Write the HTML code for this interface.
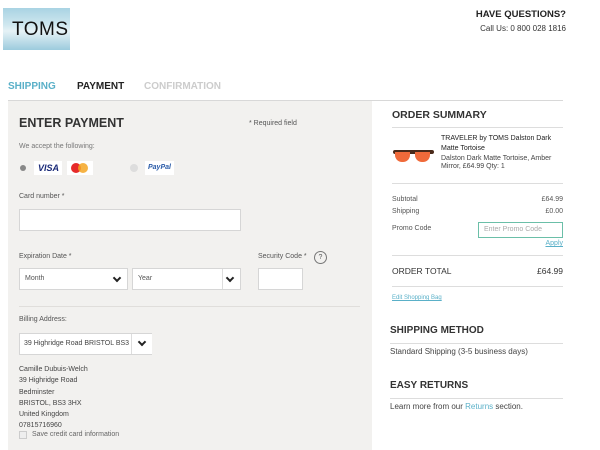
<!DOCTYPE html>
<html><head><meta charset="utf-8"><style>
*{margin:0;padding:0;box-sizing:border-box}
body{width:600px;height:450px;overflow:hidden;background:#fff;font-family:"Liberation Sans",sans-serif;color:#333;position:relative}
.a{position:absolute;white-space:nowrap}
.b{font-weight:bold}
.s{font-size:7px;color:#555}
.box{position:absolute;background:#fff;border:1px solid #d6d6d6}
.ln{position:absolute;height:1px;background:#ddd}
.chev{position:absolute;width:6px;height:6px;border-right:2px solid #222;border-bottom:2px solid #222;transform:rotate(45deg)}
</style></head><body>
<div class="a" style="left:3px;top:8px;width:67px;height:42px;background:linear-gradient(180deg,#a9d3e3,#cfe7ef 40%,#e6f2f6 55%,#9ccbdd)"></div>
<div class="a" style="left:12px;top:19px;font-size:19px;color:#111;letter-spacing:0.5px">TOMS</div>
<div class="a b" style="right:34px;top:9px;font-size:9.5px;color:#222">HAVE QUESTIONS?</div>
<div class="a" style="right:34px;top:24px;font-size:8px;color:#333">Call Us: 0 800 028 1816</div>
<div class="a b" style="left:8px;top:81px;font-size:10px;color:#5ab0c8">SHIPPING</div>
<div class="a b" style="left:77px;top:81px;font-size:10px;color:#222">PAYMENT</div>
<div class="a b" style="left:144px;top:81px;font-size:10px;color:#ccc">CONFIRMATION</div>
<div class="ln" style="left:8px;top:100px;width:555px;background:#d8d8d8"></div>
<div class="a" style="left:8px;top:101px;width:364px;height:349px;background:#f2f1ef"></div>
<div class="a b" style="left:19px;top:116px;font-size:12.5px;color:#333">ENTER PAYMENT</div>
<div class="a s" style="left:249px;top:120px">* Required field</div>
<div class="a s" style="left:19px;top:143px;color:#777">We accept the following:</div>
<div class="a" style="left:20px;top:165px;width:6px;height:6px;border-radius:50%;background:#888"></div>
<div class="a" style="left:34px;top:161px;width:28px;height:14px;background:#fff"></div>
<div class="a b" style="left:38px;top:163px;font-size:9px;color:#1a2a78;font-style:italic">VISA</div>
<div class="a" style="left:67px;top:161px;width:26px;height:14px;background:#fff"></div>
<div class="a" style="left:71px;top:163px;width:10px;height:10px;border-radius:50%;background:#e62a2a"></div>
<div class="a" style="left:78px;top:163px;width:10px;height:10px;border-radius:50%;background:#f5a623;opacity:.85"></div>
<div class="a" style="left:130px;top:164px;width:8px;height:8px;border-radius:50%;background:#ddd"></div>
<div class="a" style="left:145px;top:161px;width:29px;height:14px;background:#fff"></div>
<div class="a b" style="left:148px;top:164px;font-size:7px;color:#2a5ba8;font-style:italic">PayPal</div>
<div class="a s" style="left:19px;top:193px">Card number *</div>
<div class="box" style="left:19px;top:209px;width:222px;height:22px"></div>
<div class="a s" style="left:19px;top:253px">Expiration Date *</div>
<div class="box" style="left:19px;top:268px;width:109px;height:22px"></div>
<div class="a s" style="left:25px;top:275px">Month</div><div class="chev" style="left:114px;top:275px"></div>
<div class="box" style="left:132px;top:268px;width:109px;height:22px"></div>
<div class="a s" style="left:138px;top:275px">Year</div><div class="chev" style="left:227px;top:275px"></div>
<div class="a" style="left:222px;top:269px;width:1px;height:20px;background:#ddd"></div>
<div class="a s" style="left:258px;top:253px">Security Code *</div>
<div class="a" style="left:314px;top:251px;width:13px;height:13px;border:1px solid #777;border-radius:50%;font-size:7px;text-align:center;line-height:11px;color:#555">?</div>
<div class="box" style="left:258px;top:268px;width:45px;height:22px"></div>
<div class="ln" style="left:19px;top:306px;width:341px;background:#e0dedb"></div>
<div class="a s" style="left:19px;top:316px">Billing Address:</div>
<div class="box" style="left:19px;top:333px;width:133px;height:22px"></div>
<div class="a s" style="left:24px;top:340px;color:#444">39 Highridge Road BRISTOL BS3</div>
<div class="a" style="left:131px;top:334px;width:21px;height:20px;background:#fff;border-left:1px solid #ddd"></div>
<div class="chev" style="left:139px;top:339px"></div>
<div class="a s" style="left:19px;top:364px;line-height:11.3px;color:#444">Camille Dubuis-Welch<br>39 Highridge Road<br>Bedminster<br>BRISTOL, BS3 3HX<br>United Kingdom<br>07815716960</div>
<div class="a" style="left:19px;top:431px;width:8px;height:8px;border:1px solid #ccc;background:#eee"></div>
<div class="a s" style="left:32px;top:431px;color:#666">Save credit card information</div>
<div class="a b" style="left:392px;top:109px;font-size:10.5px;color:#333">ORDER SUMMARY</div>
<div class="ln" style="left:392px;top:127px;width:171px"></div>
<div class="a" style="left:393px;top:150px;width:41px;height:4px;background:#4a2a1a;border-radius:2px"></div>
<div class="a" style="left:395px;top:152px;width:15px;height:10px;border-radius:0 0 7px 7px;background:#f06a3a"></div>
<div class="a" style="left:415px;top:152px;width:15px;height:10px;border-radius:0 0 7px 7px;background:#f06a3a"></div>
<div class="a s" style="left:441px;top:134px;line-height:9.5px;color:#222">TRAVELER by TOMS Dalston Dark<br>Matte Tortoise</div>
<div class="a s" style="left:441px;top:155px;line-height:7.5px;color:#444">Dalston Dark Matte Tortoise, Amber<br>Mirror, £64.99 Qty: 1</div>
<div class="ln" style="left:392px;top:183px;width:171px"></div>
<div class="a s" style="left:392px;top:196px">Subtotal</div><div class="a s" style="right:37px;top:196px">£64.99</div>
<div class="a s" style="left:392px;top:208px">Shipping</div><div class="a s" style="right:37px;top:208px">£0.00</div>
<div class="a s" style="left:392px;top:225px">Promo Code</div>
<div class="a" style="left:478px;top:222px;width:85px;height:16px;border:1px solid #6bbfa8;background:#fff"></div>
<div class="a s" style="left:484px;top:226px;color:#aaa">Enter Promo Code</div>
<div class="a s" style="right:37px;top:240px;color:#5ab0c8;text-decoration:underline">Apply</div>
<div class="ln" style="left:392px;top:255px;width:171px"></div>
<div class="a" style="left:392px;top:266px;font-size:8.5px">ORDER TOTAL</div><div class="a" style="right:37px;top:266px;font-size:8.5px">£64.99</div>
<div class="ln" style="left:392px;top:286px;width:171px"></div>
<div class="a" style="left:392px;top:295px;font-size:6px;color:#5ab0c8;text-decoration:underline">Edit Shopping Bag</div>
<div class="a b" style="left:390px;top:325px;font-size:10px">SHIPPING METHOD</div>
<div class="ln" style="left:390px;top:343px;width:173px"></div>
<div class="a" style="left:390px;top:347px;font-size:8px;color:#444">Standard Shipping (3-5 business days)</div>
<div class="a b" style="left:390px;top:380px;font-size:10px">EASY RETURNS</div>
<div class="ln" style="left:390px;top:398px;width:173px"></div>
<div class="a" style="left:390px;top:402px;font-size:8px;color:#444">Learn more from our <span style="color:#5ab0c8">Returns</span> section.</div>
</body></html>
